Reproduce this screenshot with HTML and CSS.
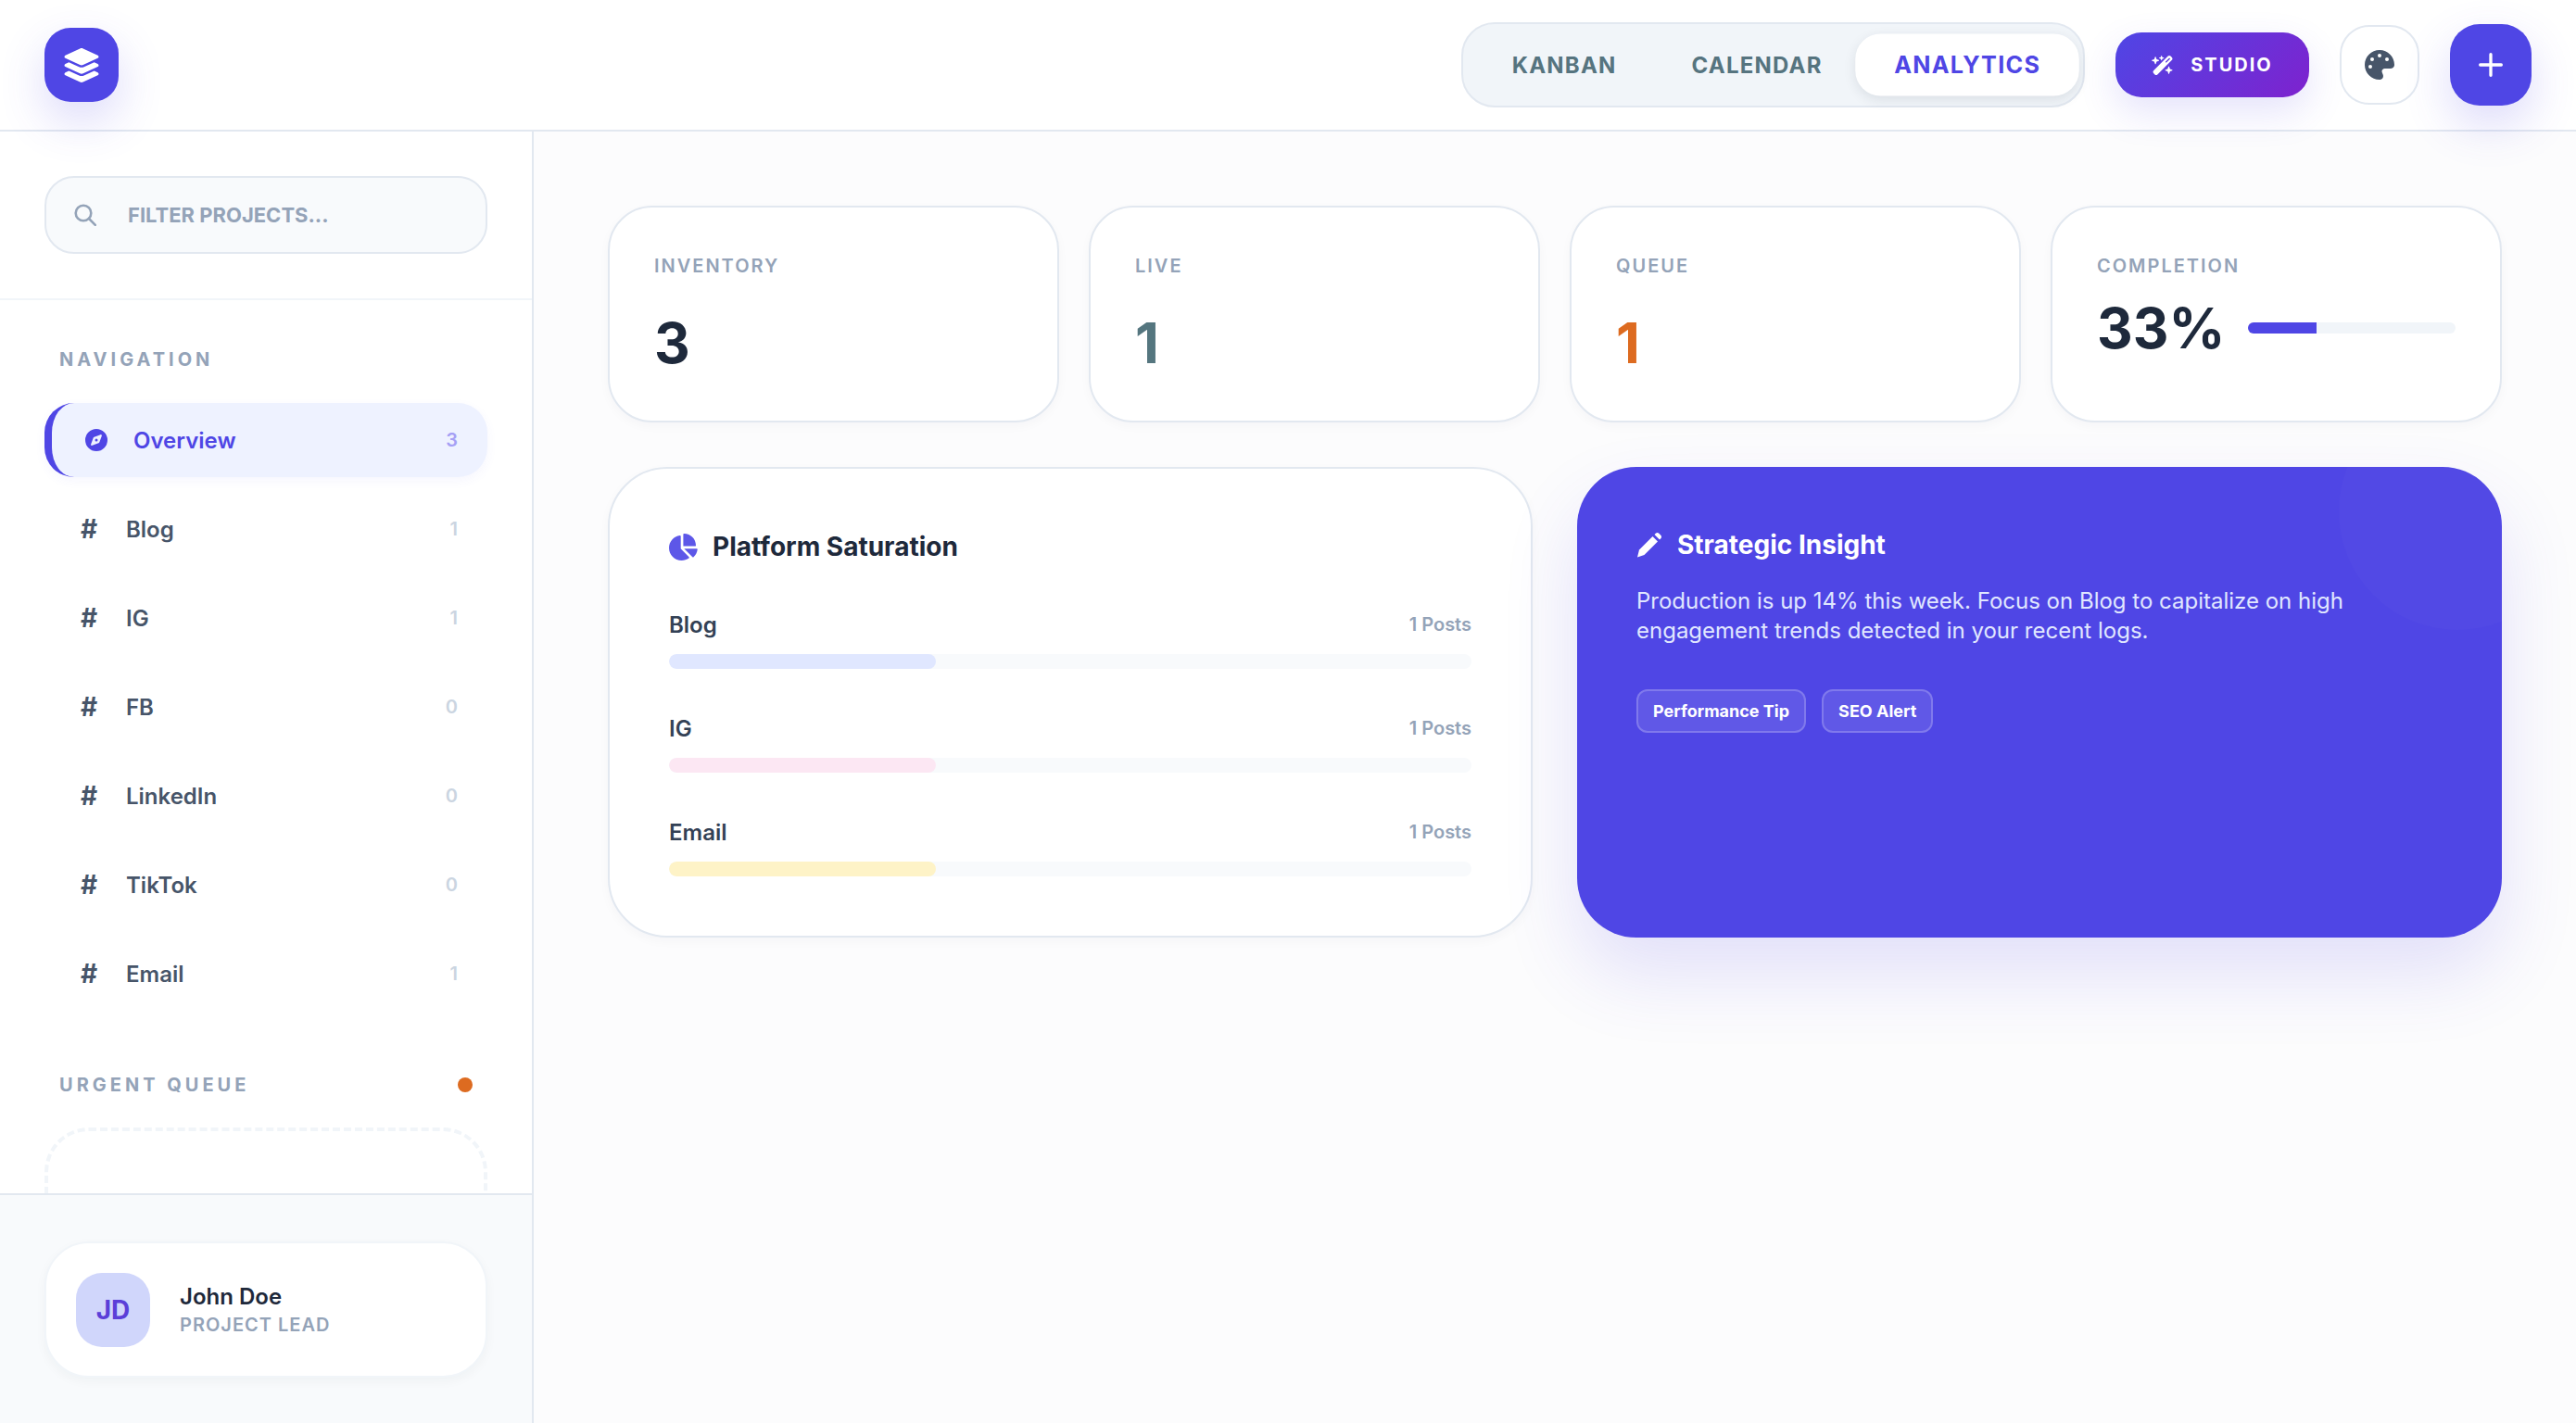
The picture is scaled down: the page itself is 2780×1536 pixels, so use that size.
FILE: index.html
```html
<!DOCTYPE html>
<html lang="en">
<head>
<meta charset="utf-8">
<title>Analytics</title>
<link rel="stylesheet" href="styles.css">
</head>
<body>
<header class="topbar">
  <div class="logo">
    <svg class="logo-icon" viewBox="0 0 576 512"><path d="M264.500 5.200c14.900-6.900 32.100-6.900 47 0l218.600 101c8.500 3.900 13.900 12.400 13.900 21.800s-5.400 17.900-13.900 21.800l-218.600 101c-14.900 6.900-32.100 6.900-47 0L45.900 149.800C37.400 145.800 32 137.300 32 128s5.400-17.900 13.900-21.800L264.500 5.200zM476.900 209.600l53.200 24.600c8.500 3.900 13.900 12.400 13.900 21.800s-5.400 17.900-13.900 21.800l-218.600 101c-14.900 6.900-32.100 6.900-47 0L45.900 277.800C37.400 273.800 32 265.300 32 256s5.400-17.900 13.900-21.800l53.200-24.600 152 70.200c23.400 10.800 50.400 10.800 73.800 0l152-70.200zm-152 198.200l152-70.200 53.200 24.600c8.500 3.900 13.900 12.400 13.900 21.800s-5.400 17.900-13.900 21.800l-218.600 101c-14.900 6.900-32.100 6.900-47 0L45.900 405.800C37.400 401.800 32 393.300 32 384s5.400-17.900 13.900-21.800l53.200-24.600 152 70.200c23.400 10.800 50.400 10.800 73.800 0z"/></svg>
  </div>
  <div class="top-actions">
    <nav class="tabs">
      <span class="tab">KANBAN</span>
      <span class="tab">CALENDAR</span>
      <span class="tab tab-active">ANALYTICS</span>
    </nav>
    <button class="studio">
      <svg class="studio-icon" viewBox="0 0 576 512"><path d="M234.700 42.700L197 56.800c-3 1.100-5 4-5 7.200s2 6.100 5 7.200l37.700 14.100L248.800 123c1.100 3 4 5 7.200 5s6.100-2 7.200-5l14.100-37.700L315 71.200c3-1.100 5-4 5-7.200s-2-6.100-5-7.200L277.300 42.700 263.200 5c-1.100-3-4-5-7.200-5s-6.100 2-7.200 5L234.700 42.700zM46.100 395.400c-18.700 18.700-18.700 49.100 0 67.900l34.600 34.600c18.700 18.700 49.100 18.700 67.900 0L529.900 116.500c18.700-18.700 18.700-49.100 0-67.900L495.300 14.100c-18.700-18.700-49.100-18.700-67.900 0L46.100 395.400zM484.600 82.600l-105 105-23.300-23.300 105-105 23.300 23.300zM7.500 117.200C3 118.900 0 123.200 0 128s3 9.100 7.500 10.800L64 160l21.200 56.500c1.700 4.500 6 7.500 10.800 7.500s9.100-3 10.800-7.500L128 160l56.500-21.200c4.500-1.700 7.500-6 7.500-10.800s-3-9.100-7.500-10.800L128 96 106.800 39.500C105.100 35 100.800 32 96 32s-9.100 3-10.800 7.500L64 96 7.500 117.200zm352 256c-4.500 1.700-7.500 6-7.500 10.800s3 9.100 7.500 10.800L416 416l21.200 56.500c1.700 4.500 6 7.500 10.800 7.500s9.100-3 10.800-7.500L480 416l56.500-21.200c4.500-1.700 7.500-6 7.500-10.800s-3-9.100-7.500-10.800L480 352l-21.200-56.500c-1.700-4.500-6-7.500-10.800-7.500s-9.100 3-10.800 7.500L416 352l-56.500 21.200z"/></svg>
      <span>STUDIO</span>
    </button>
    <button class="palette">
      <svg viewBox="0 0 512 512"><path d="M512 256c0 .9 0 1.800 0 2.700-.4 36.500-33.600 61.300-70.100 61.300H344c-26.500 0-48 21.500-48 48 0 3.400.4 6.700 1 9.900 2.100 10.200 6.500 20 10.800 29.900 6.100 13.800 12.100 27.500 12.100 42 0 31.800-21.600 60.700-53.400 62-3.500.1-7 .2-10.600.2C114.600 512 0 397.400 0 256S114.600 0 256 0s256 114.600 256 256zM128 288a32 32 0 1 0-64 0 32 32 0 1 0 64 0zm0-96a32 32 0 1 0 0-64 32 32 0 1 0 0 64zM288 96a32 32 0 1 0-64 0 32 32 0 1 0 64 0zm96 96a32 32 0 1 0 0-64 32 32 0 1 0 0 64z"/></svg>
    </button>
    <button class="add">
      <svg viewBox="0 0 24 24"><path d="M12 3.500v17M3.500 12h17"/></svg>
    </button>
  </div>
</header>

<div class="shell">
  <aside class="sidebar">
    <div class="search-wrap">
      <label class="search">
        <svg viewBox="0 0 24 24"><circle cx="10" cy="10" r="8.300"/><path d="m16 16 6.800 6.800"/></svg>
        <span>FILTER PROJECTS...</span>
      </label>
    </div>
    <div class="side-scroll">
      <h2 class="side-title">NAVIGATION</h2>
      <ul class="nav">
        <li class="nav-item nav-active">
          <svg class="nav-icon" viewBox="0 0 512 512"><path d="M256 512A256 256 0 1 0 256 0a256 256 0 1 0 0 512zm50.700-186.900L162.400 380.600c-19.400 7.500-38.500-11.600-31-31l55.500-144.300c3.300-8.500 9.900-15.100 18.400-18.400l144.300-55.500c19.400-7.500 38.500 11.600 31 31L325.100 306.700c-3.200 8.500-9.900 15.100-18.400 18.400zM288 256a32 32 0 1 0-64 0 32 32 0 1 0 64 0z"/></svg>
          <span class="nav-label">Overview</span><span class="count">3</span>
        </li>
        <li class="nav-item"><span class="hash">#</span><span class="nav-label">Blog</span><span class="count">1</span></li>
        <li class="nav-item"><span class="hash">#</span><span class="nav-label">IG</span><span class="count">1</span></li>
        <li class="nav-item"><span class="hash">#</span><span class="nav-label">FB</span><span class="count">0</span></li>
        <li class="nav-item"><span class="hash">#</span><span class="nav-label">LinkedIn</span><span class="count">0</span></li>
        <li class="nav-item"><span class="hash">#</span><span class="nav-label">TikTok</span><span class="count">0</span></li>
        <li class="nav-item"><span class="hash">#</span><span class="nav-label">Email</span><span class="count">1</span></li>
      </ul>
      <div class="urgent-head">
        <h2 class="side-title">URGENT QUEUE</h2>
        <span class="dot"></span>
      </div>
      <div class="urgent-box"></div>
    </div>
    <div class="side-foot">
      <div class="user">
        <div class="avatar">JD</div>
        <div class="user-text">
          <div class="user-name">John Doe</div>
          <div class="user-role">PROJECT LEAD</div>
        </div>
      </div>
    </div>
  </aside>

  <main class="main">
    <section class="stats">
      <article class="stat">
        <div class="stat-label">INVENTORY</div>
        <div class="stat-num">3</div>
      </article>
      <article class="stat">
        <div class="stat-label">LIVE</div>
        <div class="stat-num num-live">1</div>
      </article>
      <article class="stat">
        <div class="stat-label">QUEUE</div>
        <div class="stat-num num-queue">1</div>
      </article>
      <article class="stat">
        <div class="stat-label">COMPLETION</div>
        <div class="stat-row">
          <div class="stat-num num-row">33%</div>
          <div class="progress"><div class="progress-fill"></div></div>
        </div>
      </article>
    </section>
    <section class="panels">
      <article class="panel">
        <h3 class="panel-title">
          <svg class="pie" viewBox="0 0 576 512"><path d="M304 240V16.600c0-9 7-16.600 16-16.600C443.700 0 544 100.300 544 224c0 9-7.600 16-16.600 16H304zM32 272C32 150.700 122.100 50.300 239 34.300c9.200-1.300 17 6.100 17 15.400V288L412.500 444.500c6.700 6.700 6.200 17.700-1.500 23.100C371.800 495.600 323.800 512 272 512C139.500 512 32 404.600 32 272zm526.400 16c9.300 0 17.100 7.800 15.800 17c-7.700 55.900-34.600 105.600-73.900 142.300c-6 5.600-15.400 5.200-21.200-.7L320 288H558.400z"/></svg>
          <span>Platform Saturation</span>
        </h3>
        <div class="meter">
          <div class="meter-head"><span class="meter-name">Blog</span><span class="meter-val">1 Posts</span></div>
          <div class="meter-bar"><div class="meter-fill fill-blog"></div></div>
        </div>
        <div class="meter">
          <div class="meter-head"><span class="meter-name">IG</span><span class="meter-val">1 Posts</span></div>
          <div class="meter-bar"><div class="meter-fill fill-ig"></div></div>
        </div>
        <div class="meter">
          <div class="meter-head"><span class="meter-name">Email</span><span class="meter-val">1 Posts</span></div>
          <div class="meter-bar"><div class="meter-fill fill-email"></div></div>
        </div>
      </article>
      <article class="insight">
        <div class="insight-clip"><div class="insight-glow"></div></div>
        <h3 class="insight-title">
          <svg class="pen" viewBox="0 0 28 28"><path d="M1 27.500 3 19.500 17.500 5l5.500 5.500L8.500 25z"/><path d="M19.500 3 20.800 1.700c1-1 2.500-1 3.500 0l2 2c1 1 1 2.500 0 3.500L25 8.500z"/></svg>
          <span>Strategic Insight</span>
        </h3>
        <p class="insight-text">Production is up 14% this week. Focus on Blog to capitalize on high engagement trends detected in your recent logs.</p>
        <div class="tags">
          <span class="tag">Performance Tip</span>
          <span class="tag">SEO Alert</span>
        </div>
      </article>
    </section>
  </main>
</div>
</body>
</html>
```

FILE: styles.css
```css
* { box-sizing: border-box; }
html, body { margin: 0; padding: 0; height: 100%; }
body {
  font-family: Inter, "Liberation Sans", sans-serif;
  background: #fcfcfd;
  color: #1e293b;
  overflow: hidden;
  display: flex;
  flex-direction: column;
}
h2, h3, p, ul { margin: 0; padding: 0; }
ul { list-style: none; }
button { font-family: inherit; border: 0; padding: 0; }

/* Top bar */
.topbar {
  height: 142px;
  flex: none;
  background: #fff;
  border-bottom: 2px solid #e2e8f0;
  display: flex;
  align-items: center;
  justify-content: space-between;
  padding: 0 48px;
  position: relative;
  z-index: 2;
}
.logo {
  width: 80px;
  height: 80px;
  border-radius: 28px;
  background: #4f46e5;
  display: flex;
  align-items: center;
  justify-content: center;
  box-shadow: 0 20px 50px rgba(79, 70, 229, .2);
}
.logo-icon { width: 42px; height: 37px; fill: #fff; }
.top-actions { display: flex; align-items: center; gap: 33px; }
.tabs {
  height: 92px;
  display: flex;
  align-items: center;
  gap: 1px;
  padding: 0 10px 0 13px;
  background: #f1f5f9;
  border: 2px solid #e2e8f0;
  border-radius: 36px;
}
.tab {
  height: 64px;
  display: flex;
  align-items: center;
  padding: 0 40px;
  font-size: 24px;
  font-weight: 700;
  letter-spacing: 1.200px;
  color: #56747f;
  border-radius: 26px;
}
.tab-active {
  background: #fff;
  color: #4f46e5;
  transform: scale(1.05);
  box-shadow: 0 4px 12px rgba(30, 41, 59, .1);
}
.studio {
  width: 209px;
  height: 70px;
  border-radius: 28px;
  background: linear-gradient(135deg, #4f46e5, #7e22ce);
  color: #fff;
  display: flex;
  align-items: center;
  justify-content: center;
  gap: 18px;
  font-size: 20px;
  font-weight: 700;
  letter-spacing: 2px;
  box-shadow: 0 16px 40px rgba(79, 70, 229, .15);
}
.studio-icon { width: 24px; height: 21px; fill: #fff; }
.palette {
  width: 86px;
  height: 86px;
  border-radius: 32px;
  background: #fff;
  border: 2px solid #e2e8f0;
  display: flex;
  align-items: center;
  justify-content: center;
}
.palette svg { width: 32px; height: 32px; fill: #475569; }
.add {
  width: 88px;
  height: 88px;
  border-radius: 32px;
  background: #4f46e5;
  display: flex;
  align-items: center;
  justify-content: center;
  box-shadow: 0 20px 50px rgba(79, 70, 229, .2);
}
.add svg { width: 32px; height: 32px; fill: none; stroke: #fff; stroke-width: 2.500; stroke-linecap: round; }

.shell { flex: 1; display: flex; min-height: 0; }

/* Sidebar */
.sidebar {
  width: 576px;
  flex: none;
  background: #fff;
  border-right: 2px solid #e2e8f0;
  display: flex;
  flex-direction: column;
}
.search-wrap { padding: 48px; border-bottom: 2px solid #f1f5f9; }
.search {
  height: 84px;
  display: flex;
  align-items: center;
  gap: 34px;
  padding: 0 30px;
  background: #f8fafc;
  border: 2px solid #e2e8f0;
  border-radius: 32px;
  font-size: 22px;
  font-weight: 700;
  color: #94a3b8;
}
.search svg { width: 24px; height: 24px; fill: none; stroke: #94a3b8; stroke-width: 2.600; stroke-linecap: round; flex: none; }
.side-scroll { flex: 1; min-height: 0; overflow: hidden; padding: 54px 48px 0; }
.side-title {
  padding-left: 16px;
  font-size: 20px;
  line-height: 20px;
  font-weight: 700;
  letter-spacing: 4px;
  color: #94a3b8;
}
.nav { margin-top: 37px; display: flex; flex-direction: column; gap: 16px; }
.nav-item {
  height: 80px;
  display: flex;
  align-items: center;
  padding-left: 36px;
  padding-right: 32px;
  border-radius: 32px;
  color: #475569;
}
.nav-active {
  background: #eef2ff;
  border-left: 8px solid #4f46e5;
  color: #4f46e5;
  box-shadow: 0 4px 12px rgba(79, 70, 229, .05);
}
.nav-icon { width: 24px; height: 24px; flex: none; fill: #4f46e5; margin-right: 28px; }
.hash {
  width: 24px;
  margin-right: 28px;
  flex: none;
  font-size: 28px;
  font-weight: 700;
  text-align: center;
}
.nav-label { flex: 1; font-size: 24px; font-weight: 600; }
.count { font-size: 20px; font-weight: 600; color: #cbd5e1; }
.nav-active .count { color: #a5a0f5; }
.urgent-head {
  margin-top: 70px;
  display: flex;
  align-items: center;
  justify-content: space-between;
  padding-right: 16px;
}
.dot { width: 16px; height: 16px; border-radius: 50%; background: #dd6b20; }
.urgent-box {
  height: 120px;
  margin-top: 36px;
  border: 4px dashed #f1f5f9;
  border-radius: 48px;
}
.side-foot {
  flex: none;
  height: 248px;
  padding: 50px 48px 0;
  background: #f8fafc;
  border-top: 2px solid #e2e8f0;
}
.user {
  height: 147px;
  background: #fff;
  border: 2px solid #f1f5f9;
  border-radius: 48px;
  display: flex;
  align-items: center;
  gap: 32px;
  padding: 0 32px;
  box-shadow: 0 4px 12px rgba(30, 41, 59, .04);
}
.avatar {
  width: 80px;
  height: 80px;
  border-radius: 28px;
  background: #d0d6fb;
  color: #5b3fd8;
  font-size: 28px;
  font-weight: 700;
  display: flex;
  align-items: center;
  justify-content: center;
}
.user-name { font-size: 24px; line-height: 30px; font-weight: 600; color: #1e293b; }
.user-role { font-size: 20px; line-height: 26px; font-weight: 600; letter-spacing: 1px; color: #94a3b8; margin-top: 2px; }

/* Main */
.main { flex: 1; min-width: 0; padding: 80px; }
.stats { display: grid; grid-template-columns: repeat(4, 1fr); gap: 32px; }
.stat {
  height: 234px;
  padding: 48px;
  background: #fff;
  border: 2px solid #e2e8f0;
  border-radius: 48px;
  box-shadow: 0 4px 12px rgba(30, 41, 59, .03);
}
.stat-label {
  font-size: 20px;
  line-height: 30px;
  font-weight: 600;
  letter-spacing: 2px;
  color: #94a3b8;
}
.stat-num { margin-top: 32px; font-size: 60px; line-height: 72px; font-weight: 700; color: #1e293b; }
.num-live { color: #55767f; }
.num-queue { color: #dd6b20; }
.stat-row { display: flex; align-items: center; gap: 25px; margin-top: 16px; }
.num-row { margin-top: 0; }
.progress { flex: 1; height: 12px; background: #f1f5f9; border-radius: 6px; overflow: hidden; }
.progress-fill { width: 33%; height: 100%; background: #4f46e5; }

.panels { margin-top: 48px; display: grid; grid-template-columns: 1fr 1fr; gap: 48px; }
.panel {
  height: 508px;
  padding: 64px;
  background: #fff;
  border: 2px solid #e2e8f0;
  border-radius: 64px;
  box-shadow: 0 4px 12px rgba(30, 41, 59, .03);
}
.panel-title, .insight-title {
  display: flex;
  align-items: center;
  font-size: 28px;
  line-height: 40px;
  font-weight: 700;
  gap: 16px;
}
.panel-title { color: #1e293b; }
.pie { width: 33px; height: 29px; fill: #5d57e8; flex: none; margin-left: -2px; }
.meter { margin-top: 50px; }
.meter-head { display: flex; justify-content: space-between; align-items: center; height: 28px; margin-bottom: 18px; }
.meter-name { font-size: 24px; font-weight: 600; color: #334155; }
.meter-val { font-size: 20px; font-weight: 600; color: #94a3b8; }
.meter-bar { height: 16px; border-radius: 8px; background: #f8fafc; overflow: hidden; }
.meter-fill { width: 33.3%; height: 100%; border-radius: 8px; }
.fill-blog { background: #e0e7ff; }
.fill-ig { background: #fce7f3; }
.fill-email { background: #fef3c7; }

.insight {
  position: relative;
  height: 508px;
  padding: 64px;
  background: #4f46e5;
  border-radius: 64px;
  color: #fff;
  box-shadow: 0 40px 80px rgba(79, 70, 229, .15);
}
.insight-clip {
  position: absolute;
  inset: 0;
  overflow: hidden;
  border-radius: 64px;
}
.insight-glow {
  position: absolute;
  top: -80px;
  right: -80px;
  width: 256px;
  height: 256px;
  border-radius: 50%;
  background: rgba(255, 255, 255, .02);
}
.insight-title { position: relative; color: #fff; }
.pen { width: 28px; height: 28px; fill: #fff; flex: none; }
.insight-text {
  position: relative;
  margin-top: 25px;
  font-size: 24px;
  line-height: 32px;
  color: #e0e7ff;
}
.tags { position: relative; margin-top: 47px; display: flex; gap: 17px; }
.tag {
  height: 47px;
  padding: 0 16px;
  display: flex;
  align-items: center;
  font-size: 18px;
  font-weight: 700;
  color: #fff;
  background: rgba(255, 255, 255, .1);
  border: 2px solid rgba(255, 255, 255, .2);
  border-radius: 12px;
}
```
